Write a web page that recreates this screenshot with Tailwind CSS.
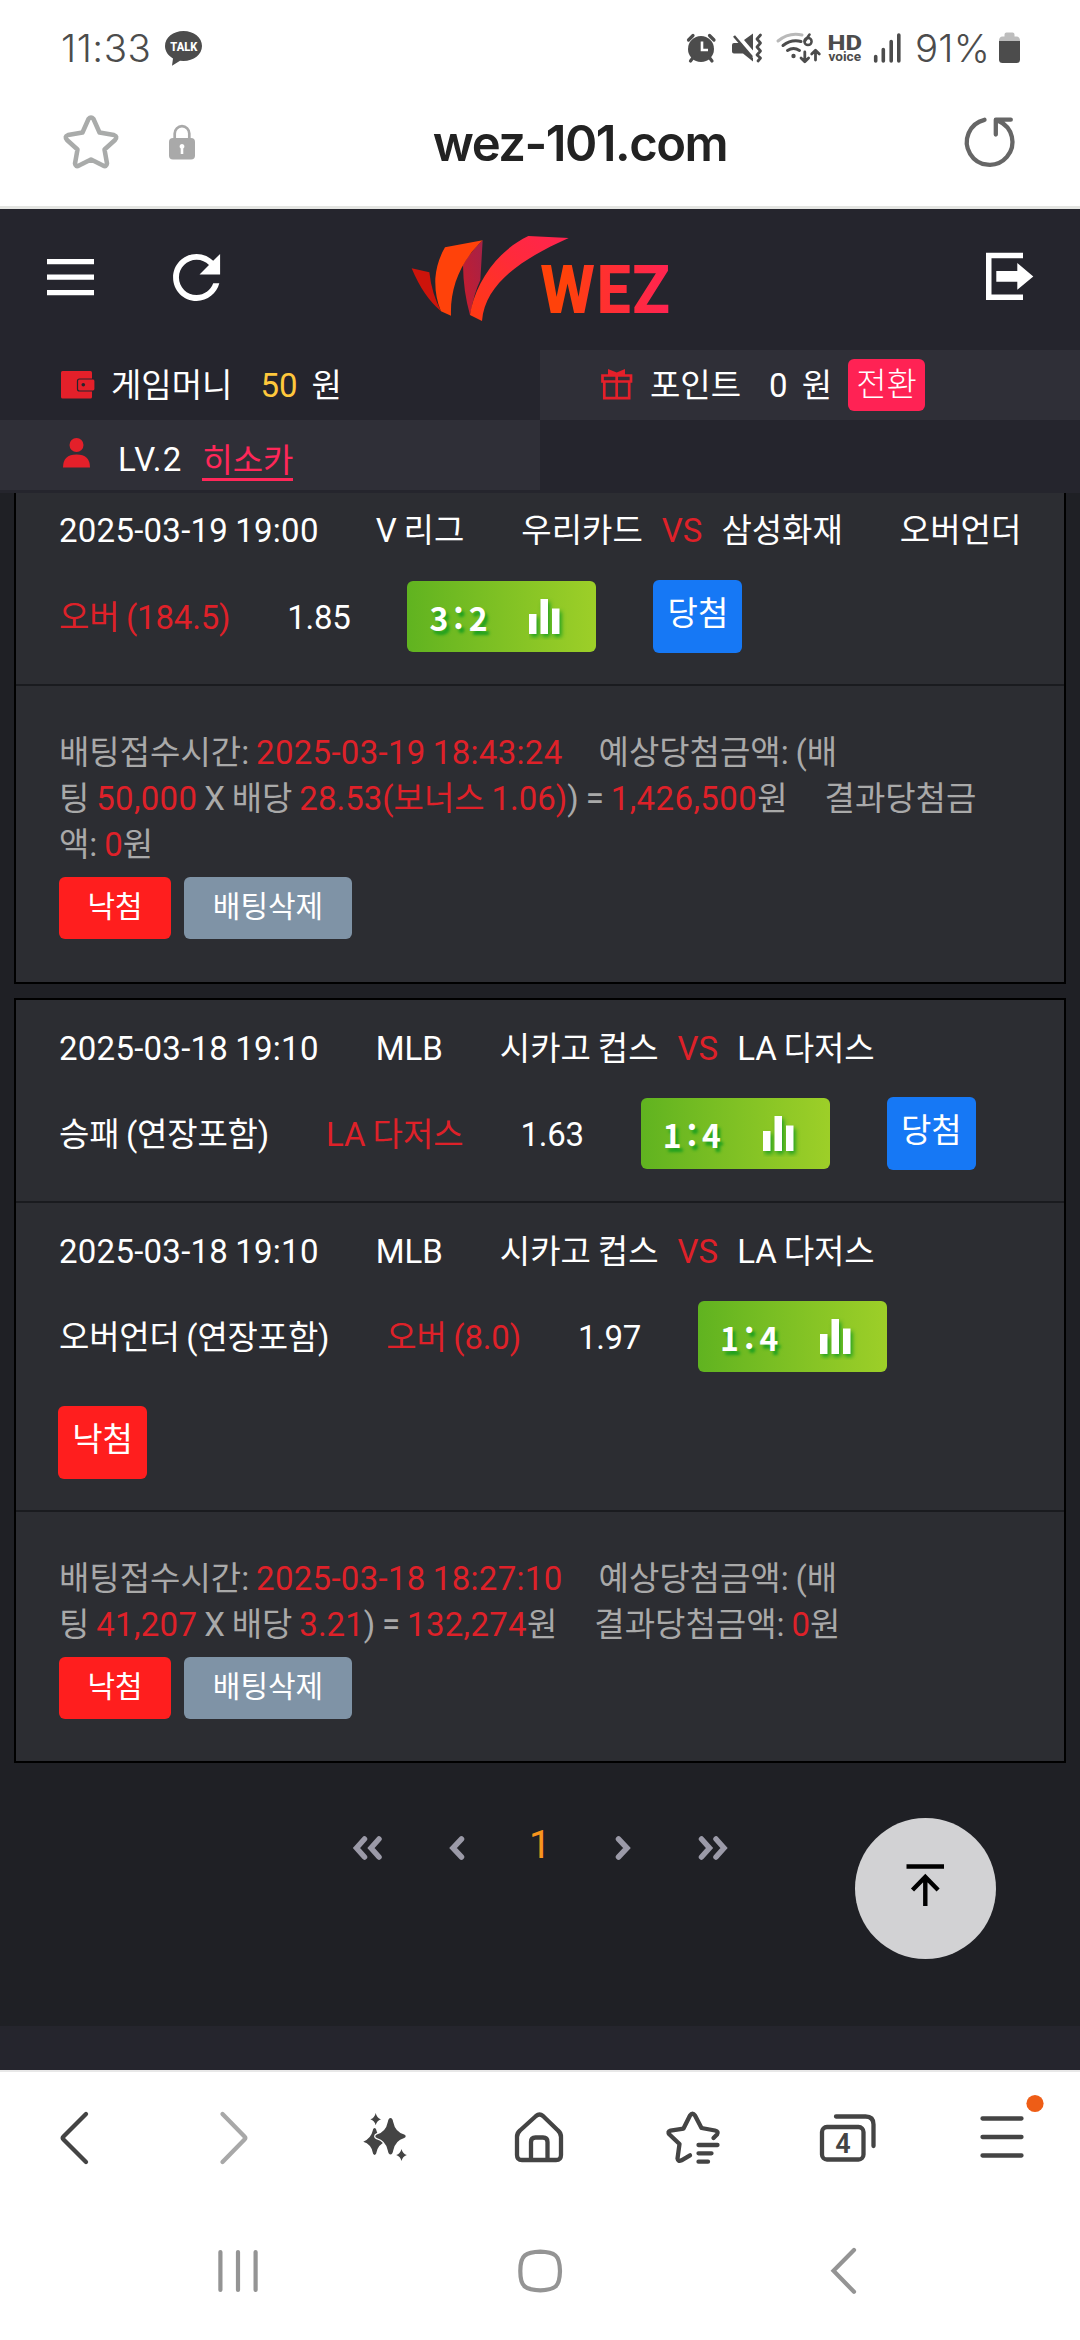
<!DOCTYPE html>
<html lang="ko">
<head>
<meta charset="utf-8">
<title>wez-101.com</title>
<script src="https://cdn.jsdelivr.net/npm/@tailwindcss/browser@4"></script>
</head>
<body class="w-[1080px] h-[2340px] overflow-hidden bg-white font-[Roboto,'Noto_Sans_CJK_KR',sans-serif] text-[33px] leading-[46px] text-white whitespace-nowrap">
<div class="relative flex h-[2340px] w-[1080px] flex-col">

  <!-- status bar -->
  <div class="flex h-[96px] shrink-0 text-[#4c4c4c]">
    <div class="flex w-[160px] items-center pl-[61px] font-[Inter,sans-serif] text-[38.5px] font-light tracking-[0.5px]">11:33</div>
    <svg class="h-[96px] w-[520px]" viewBox="160 0 520 96">
      <path fill="#4c4c4c" d="M183.500 31c10.200 0 18.500 6.600 18.500 15s-8.300 15-18.500 15l-3.500-.3-8 5 1-7.300c-4.800-2.600-8-7.200-8-12.400 0-8.400 8.300-15 18.500-15z"/>
      <text x="170.300" y="51" textLength="27" lengthAdjust="spacingAndGlyphs" font-family="Roboto, sans-serif" font-size="12.800" font-weight="800" fill="#fff">TALK</text>
    </svg>
    <svg class="h-[96px] w-[232px]" viewBox="680 0 232 96" fill="none" stroke="#4c4c4c">
      <!-- alarm -->
      <circle cx="701" cy="49" r="13" fill="#4c4c4c" stroke="none"/>
      <path d="M688.500 40l4.500-4.500M714 40l-4.500-4.500M690.500 61l3-4M712 61l-3-4" stroke-width="3.200" stroke-linecap="round"/>
      <path d="M702 41.500v8.500h6" stroke="#fff" stroke-width="2.600"/>
      <!-- vibrate / mute -->
      <path d="M732 45q0-2 2-2h7l12 15v3.500l-10-8h-9q-2 0-2-2zM753 33.500v17l-9-10.500z" fill="#4c4c4c" stroke="none"/>
      <path d="M734 36l18 21" stroke-width="2.600"/>
      <path d="M760.500 35l-3.500 4 3.500 4-3.500 4 3.500 4-3.500 4 3.500 3-2.500 3" stroke-width="2.800" stroke-linecap="round" stroke-linejoin="round"/>
      <!-- wifi -->
      <path d="M778 41q11-9 24-6" stroke="#b9b9b9" stroke-width="3" stroke-linecap="round"/>
      <path d="M783 45.500q8.500-6.500 18-4M787.500 50.500q6-4 12 0" stroke-width="3" stroke-linecap="round"/>
      <circle cx="793.500" cy="56" r="2.200" fill="#4c4c4c" stroke="none"/>
      <path d="M809.500 34.500l-4.500 6.500" stroke-width="2.600" stroke-linecap="round"/>
      <circle cx="808" cy="41.500" r="3.600" stroke-width="2.500"/>
      <path d="M804.800 52v9M801 58l3.800 3.800 3.800-3.800M815.500 60v-9M811.700 54l3.800-3.800 3.800 3.800" stroke-width="2.800" stroke-linecap="round" stroke-linejoin="round"/>
      <g fill="#4c4c4c" stroke="none" font-family="Roboto, sans-serif">
        <text x="827.500" y="50" textLength="34.500" lengthAdjust="spacingAndGlyphs" font-size="20" font-weight="800">HD</text>
        <text x="828.500" y="61.300" textLength="32.500" lengthAdjust="spacingAndGlyphs" font-size="13" font-weight="700">voice</text>
      </g>
      <path d="M875.700 56.500v4.500M883.300 49.500v11.500M891.200 41.500v19.500M898.800 35v26" stroke-width="3.600" stroke-linecap="round"/>
    </svg>
    <div class="flex w-[80px] items-center pl-[3px] font-[Inter,sans-serif] text-[38.500px] font-light tracking-[0.2px]">91%</div>
    <svg class="h-[96px] w-[88px]" viewBox="992 0 88 96">
      <path fill="#bdbdbd" d="M1004.500 36.500v-2q0-2 2-2h6q2 0 2 2v2h2q3.500 0 3.500 4.500h-21q0-4.500 3.500-4.500z"/>
      <path fill="#4c4c4c" d="M999 41h21v18.500q0 3.500-3.500 3.500h-14q-3.500 0-3.500-3.500z"/>
    </svg>
  </div>

  <!-- address bar -->
  <div class="flex h-[113px] shrink-0 border-b-[3px] border-[#e4e5e2]">
    <svg class="h-[110px] w-[430px]" viewBox="0 96 430 110">
      <path fill="none" stroke="#a9abaa" stroke-width="4.500" stroke-linejoin="round" d="M88.500 119q2.500-3 5 0L99.500 132.500 114 135q4 1.500 1 5L104.500 149.500 107 163.500q-.5 4-4 2L91 159.500 79 165.500q-3.500 2-4-2L77.500 149.500 67 140q-3-3.500 1-5L82.500 132.500z"/>
      <path fill="none" stroke="#a9a9a9" stroke-width="2.700" d="M174.700 140v-6.500a7.300 7.300 0 0 1 14.600 0V140"/>
      <rect x="169" y="138" width="26" height="21.500" rx="4" fill="#a9a9a9"/>
      <path fill="#fff" d="M182 144a2.500 2.500 0 0 1 1.300 4.600v5.400h-2.600v-5.400a2.500 2.500 0 0 1 1.300-4.600z"/>
    </svg>
    <div class="flex w-[300px] items-center justify-center pb-[15px] font-[Inter,sans-serif] text-[49px] font-semibold tracking-[-1.5px] text-[#222]">wez-101.com</div>
    <svg class="h-[110px] w-[350px]" viewBox="730 96 350 110">
      <path fill="none" stroke="#666" stroke-width="4.300" stroke-linecap="round" stroke-linejoin="round" d="M984.500 119.800a22.800 22.800 0 1 0 14 1.200M995.800 134.500v-14.800h15"/>
    </svg>
  </div>

  <!-- site header -->
  <div class="flex h-[141px] shrink-0 bg-[#25252d]">
    <svg class="h-[141px] w-[400px]" viewBox="0 209 400 141" fill="#fff">
      <path d="M47 259h47v5.300H47zM47 274.500h47v5.300H47zM47 290h47v5.300H47z"/>
      <g transform="translate(161.300 242.200) scale(2.940)"><path d="M17.650 6.350C16.200 4.900 14.210 4 12 4c-4.420 0-7.990 3.580-7.990 8s3.570 8 7.990 8c3.730 0 6.840-2.550 7.730-6h-2.080c-.82 2.330-3.040 4-5.650 4-3.310 0-6-2.690-6-6s2.690-6 6-6c1.660 0 3.140.69 4.220 1.780L13 11h7V4l-2.350 2.350z"/></g>
    </svg>
    <svg class="mt-[16px] h-[105px] w-[280px]" viewBox="0 0 840 315">
      <defs>
        <linearGradient id="swoosh" x1="0" y1="1" x2="1" y2="0"><stop offset="0" stop-color="#ff3a10"/><stop offset=".6" stop-color="#ff2a3c"/><stop offset="1" stop-color="#ff2450"/></linearGradient>
        <linearGradient id="word" gradientUnits="userSpaceOnUse" x1="423" y1="0" x2="804" y2="0"><stop offset=".2" stop-color="#ff420a"/><stop offset=".5" stop-color="#ff3030"/><stop offset="1" stop-color="#ff2450"/></linearGradient>
        <linearGradient id="fold" x1="0" y1="1" x2="1" y2="0"><stop offset="0" stop-color="#c81c2c"/><stop offset="1" stop-color="#a52248"/></linearGradient>
      </defs>
      <path fill="#cd140b" d="M35 130L88 142Q95 205 123 259 70 215 35 130z"/>
      <path fill="url(#fold)" d="M248 46L241 165Q222 205 210 270 190 200 189 120 215 75 248 46z"/>
      <path fill="#ff420a" d="M135 67L248 46C180 110 150 190 153 272L123 259Q104 215 106 160 110 110 135 67z"/>
      <path fill="url(#swoosh)" d="M385 33L506 39C380 95 255 170 246 288L210 270C222 185 285 80 385 33z"/>
      <g fill="url(#word)" font-family="Roboto, sans-serif" font-weight="800" font-size="201">
        <text x="421" y="263" textLength="164" lengthAdjust="spacingAndGlyphs">W</text>
        <text x="590" y="263" textLength="102" lengthAdjust="spacingAndGlyphs">E</text>
        <text x="697" y="263" textLength="113" lengthAdjust="spacingAndGlyphs">Z</text>
      </g>
    </svg>
    <svg class="h-[141px] w-[400px]" viewBox="680 209 400 141" fill="#fff">
      <path d="M986 252.700h37v5.500h-31.500v36.300H1023v5.500h-37z"/>
      <path d="M996.300 271h21v-8l16 13.500-16 13.200v-8h-21z"/>
    </svg>
  </div>

  <!-- account strip -->
  <div class="grid h-[143px] shrink-0 grid-cols-2 grid-rows-[70px_70px] bg-[#25252d]">
    <div class="flex items-center">
      <svg class="ml-[60px] h-[34px] w-[36px]" viewBox="60 368 36 34">
        <rect x="61" y="371" width="31" height="27.500" rx="1.500" fill="#e4202a"/>
        <rect x="77.500" y="379" width="17.500" height="12" rx="2" fill="#e4202a" stroke="#25252d" stroke-width="1.200"/>
        <circle cx="83.300" cy="384.800" r="1.800" fill="#25252d"/>
      </svg>
      <span class="ml-[15px] pt-[2px]">게임머니</span><span class="ml-[28px] pt-[2px] text-[#ffc83c]">50</span><span class="ml-[14px] pt-[2px]">원</span>
    </div>
    <div class="flex items-center bg-[#2f2f37]">
      <svg class="ml-[60px] h-[34px] w-[36px]" viewBox="600 368 36 34" fill="none" stroke="#e4202a" stroke-width="2.700">
        <path d="M602.500 375.500h28.500v6H602.500zM604.300 381.500v16.700h24.900v-16.700M616.700 375v23"/>
        <path fill="#e4202a" stroke="none" d="M608 369l8.700 3.500 8.300-3.500v6h-17z"/>
      </svg>
      <span class="ml-[14px] pt-[2px]">포인트</span><span class="ml-[28px] pt-[2px]">0</span><span class="ml-[14px] pt-[2px]">원</span>
      <span class="ml-[16px] flex h-[52px] w-[77px] items-center justify-center rounded-md bg-[#ff2254] font-light">전환</span>
    </div>
    <div class="flex items-center bg-[#2f2f37]">
      <svg class="ml-[60px] h-[34px] w-[36px]" viewBox="60 439 36 34" fill="#e4202a">
        <circle cx="76.500" cy="446" r="7"/><path d="M63 468.500q0-13 13.500-13T90 468.500z"/>
      </svg>
      <span class="ml-[22px] pt-[9px] tracking-[1.2px]">LV.2</span>
      <span class="mt-[9px] ml-[20px] h-[43px] border-b-[3px] border-[#ff2759] leading-[46px] text-[#ff2759]">히소카</span>
    </div>
  </div>

  <!-- bet history -->
  <div class="h-[1533px] shrink-0 bg-[#1f2025] px-[14px] [word-spacing:-1.3px]">
    <section class="h-[491px] border-x-2 border-b-2 border-black bg-[#2c2d32]">
      <div class="flex h-[193px] flex-col gap-[26px] border-b-2 border-[#1a1b1f] pt-[15px] pl-[43px]">
        <div class="flex h-[46px] gap-[57px]">
          <span class="tracking-[0.25px]">2025-03-19 19:00</span><span>V 리그</span>
          <span class="flex gap-[19px]"><span>우리카드</span><span class="text-[#de2129]">VS</span><span>삼성화재</span></span>
          <span>오버언더</span>
        </div>
        <div class="flex h-[73px] items-center gap-[57px]">
          <span class="pt-[2px] tracking-[-0.2px] text-[#de2129]">오버 (184.5)</span><span class="pt-[2px] tracking-[-0.3px]">1.85</span>
          <span class="flex h-[71px] w-[189px] items-center rounded-md bg-linear-to-r from-[#60b320] to-[#9dcf28] pl-[22px]"><span class="w-[100px] font-['Noto_Sans_CJK_KR',sans-serif] text-[32px] font-bold tracking-[5px] text-shadow-[3px_4px_3px_#1fa01f]">3:2</span><svg class="h-[46px] w-[40px]" viewBox="0 0 40 46"><path class="drop-shadow-[2px_3px_2px_#1fa01f]" fill="#fff" d="M0 20h7.500v20H0zM11.500 5H19v35h-7.500zM23 14.500h7.500V40H23z"/></svg></span>
          <span class="h-[73px] w-[89px] rounded-md bg-[#1678f5] pt-[11px] text-center">당첨</span>
        </div>
      </div>
      <div class="pt-[44px] pl-[43px] text-[#a9a9a9]">
        <p>배팅접수시간: <span class="tracking-[0.3px] text-[#de2129]">2025-03-19 18:43:24</span><span class="ml-[36px]">예상당첨금액: (배</span></p>
        <p>팅 <span class="tracking-[0.3px] text-[#de2129]">50,000</span> X 배당 <span class="text-[#de2129]">28.53(보너스 1.06)</span>) = <span class="tracking-[0.4px] text-[#de2129]">1,426,500</span>원<span class="ml-[37px]">결과당첨금</span></p>
        <p>액: <span class="text-[#de2129]">0</span>원</p>
        <div class="mt-[9px] flex gap-[13px] text-[30px] text-white">
          <span class="h-[62px] w-[112px] rounded-md bg-[#ff1e1e] pt-[7px] text-center">낙첨</span>
          <span class="h-[62px] w-[168px] rounded-md bg-[#7f93a6] pt-[7px] text-center">배팅삭제</span>
        </div>
      </div>
    </section>

    <section class="mt-[14px] h-[765px] border-2 border-black bg-[#2c2d32]">
      <div class="flex h-[203px] flex-col gap-[25px] border-b-2 border-[#1a1b1f] pt-[26px] pl-[43px]">
        <div class="flex h-[46px] gap-[57px]">
          <span class="tracking-[0.25px]">2025-03-18 19:10</span><span>MLB</span>
          <span class="flex gap-[19px]"><span>시카고 컵스</span><span class="text-[#de2129]">VS</span><span>LA 다저스</span></span>
        </div>
        <div class="flex h-[73px] items-center gap-[57px]">
          <span class="pt-[2px] tracking-[-0.2px]">승패 (연장포함)</span><span class="pt-[2px] text-[#de2129]">LA 다저스</span><span class="pt-[2px] tracking-[-0.3px]">1.63</span>
          <span class="flex h-[71px] w-[189px] items-center rounded-md bg-linear-to-r from-[#60b320] to-[#9dcf28] pl-[22px]"><span class="w-[100px] font-['Noto_Sans_CJK_KR',sans-serif] text-[32px] font-bold tracking-[5px] text-shadow-[3px_4px_3px_#1fa01f]">1:4</span><svg class="h-[46px] w-[40px]" viewBox="0 0 40 46"><path class="drop-shadow-[2px_3px_2px_#1fa01f]" fill="#fff" d="M0 20h7.500v20H0zM11.500 5H19v35h-7.500zM23 14.500h7.500V40H23z"/></svg></span>
          <span class="h-[73px] w-[89px] rounded-md bg-[#1678f5] pt-[11px] text-center">당첨</span>
        </div>
      </div>
      <div class="h-[309px] border-b-2 border-[#1a1b1f] pt-[26px] pl-[43px]">
        <div class="flex h-[46px] gap-[57px]">
          <span class="tracking-[0.25px]">2025-03-18 19:10</span><span>MLB</span>
          <span class="flex gap-[19px]"><span>시카고 컵스</span><span class="text-[#de2129]">VS</span><span>LA 다저스</span></span>
        </div>
        <div class="mt-[25px] flex h-[73px] items-center gap-[57px]">
          <span class="pt-[2px] tracking-[-0.2px]">오버언더 (연장포함)</span><span class="pt-[2px] tracking-[-0.2px] text-[#de2129]">오버 (8.0)</span><span class="pt-[2px] tracking-[-0.3px]">1.97</span>
          <span class="flex h-[71px] w-[189px] items-center rounded-md bg-linear-to-r from-[#60b320] to-[#9dcf28] pl-[22px]"><span class="w-[100px] font-['Noto_Sans_CJK_KR',sans-serif] text-[32px] font-bold tracking-[5px] text-shadow-[3px_4px_3px_#1fa01f]">1:4</span><svg class="h-[46px] w-[40px]" viewBox="0 0 40 46"><path class="drop-shadow-[2px_3px_2px_#1fa01f]" fill="#fff" d="M0 20h7.500v20H0zM11.500 5H19v35h-7.500zM23 14.500h7.500V40H23z"/></svg></span>
        </div>
        <div class="mt-[33px] -ml-px h-[73px] w-[89px] rounded-md bg-[#ff1e1e] pt-[11px] text-center">낙첨</div>
      </div>
      <div class="pt-[44px] pl-[43px] text-[#a9a9a9]">
        <p>배팅접수시간: <span class="tracking-[0.3px] text-[#de2129]">2025-03-18 18:27:10</span><span class="ml-[36px]">예상당첨금액: (배</span></p>
        <p>팅 <span class="tracking-[0.3px] text-[#de2129]">41,207</span> X 배당 <span class="text-[#de2129]">3.21</span>) = <span class="tracking-[0.3px] text-[#de2129]">132,274</span>원<span class="ml-[37px]">결과당첨금액: <span class="text-[#de2129]">0</span>원</span></p>
        <div class="mt-[9px] flex gap-[13px] text-[30px] text-white">
          <span class="h-[62px] w-[112px] rounded-md bg-[#ff1e1e] pt-[7px] text-center">낙첨</span>
          <span class="h-[62px] w-[168px] rounded-md bg-[#7f93a6] pt-[7px] text-center">배팅삭제</span>
        </div>
      </div>
    </section>

    <div class="mt-[59px] flex h-[46px] justify-center">
      <svg class="h-[46px] w-[180px]" viewBox="346 1822 180 46" fill="none" stroke="#9b9aa8" stroke-width="5.500" stroke-linecap="round" stroke-linejoin="miter"><path d="M364.500 1839l-8 9 8 9M379 1839l-8 9 8 9M461.500 1839l-8.500 9 8.500 9"/></svg>
      <span class="w-[28px] text-center text-[39px] text-[#f7951d]">1</span>
      <svg class="h-[46px] w-[180px]" viewBox="554 1822 180 46" fill="none" stroke="#9b9aa8" stroke-width="5.500" stroke-linecap="round" stroke-linejoin="miter"><path d="M618.500 1839l8.500 9-8.500 9M701.500 1839l8 9-8 9M716 1839l8 9-8 9"/></svg>
    </div>
  </div>
  <div class="h-[46px] shrink-0 border-b-2 border-[#e8e8e8] bg-[#25252d]"></div>

  <!-- browser toolbar -->
  <div class="flex h-[130px] shrink-0">
    <svg class="h-[130px] w-[308px]" viewBox="0 2072 308 130" fill="none" stroke-width="4.300" stroke-linecap="round" stroke-linejoin="round">
      <path stroke="#444" d="M86 2114l-22.500 22.500q-1.500 1.500 0 3L86 2162"/>
      <path stroke="#a8a8a8" d="M222.500 2114l22 22.500q1.500 1.500 0 3l-22 22.500"/>
    </svg>
    <svg class="h-[130px] w-[155px]" viewBox="308 2072 155 130" fill="#444">
      <path d="M374.600 2128q1.600 0 2 3 1.500 7 9.400 10.700-7.800 2.600-9.400 10.300-.4 3-2 3t-2-3q-1.500-7.700-9.300-10.300 7.800-3.500 9.300-10.700.4-3 2-3z"/>
      <path stroke="#fff" stroke-width="2.500" paint-order="stroke" d="M390.500 2118q2 0 2.700 4 2 10 11 12.500 1.500.6 1.500 1.700t-1.500 1.800q-9 2.500-11 12.500-.7 4-2.700 4t-2.700-4q-2-10-11-12.500-1.500-.7-1.500-1.800t1.500-1.700q9-2.500 11-12.500.7-4 2.700-4z"/>
      <path d="M375.700 2113q1 5 5.300 6.300-4.300 1.500-5.300 6-1-4.500-5.300-6 4.300-1.300 5.300-6.300zM401.500 2149q1 4.700 5.300 6-4.300 1.500-5.300 6-1-4.500-5.300-6 4.300-1.300 5.300-6z"/>
    </svg>
    <svg class="h-[130px] w-[617px]" viewBox="463 2072 617 130" fill="none" stroke="#444" stroke-width="4.300" stroke-linecap="round" stroke-linejoin="round">
      <path d="M517 2137q0-4 3-6.500l16-14.500q3.500-3 7 0l15 14.500q3 2.500 3 6.500v18q0 5-5 5h-34q-5 0-5-5zM531 2159v-17q0-4.500 4.500-4.500h7.500q4.500 0 4.500 4.500v17"/>
      <path d="M713.500 2138l3.500-3.500q2-3-2-4l-13.500-2.500-6.500-12.500q-2.500-3.500-5 0l-6.500 13-13 2q-3.500 1-1 4l10 9.500-2 14.500q.5 3.500 4 1.800l8.500-5M698.500 2145h19M698.500 2153.300h13M698.500 2161.700h9.500"/>
      <rect x="822" y="2127" width="41.500" height="32.500" rx="5"/>
      <path d="M836 2116.500h29.500q8 0 8 8V2146"/>
      <path d="M982.500 2118.500h39M982.500 2137h39M982.500 2155.500h39"/>
      <circle cx="1035" cy="2103.500" r="8.600" fill="#ee5d16" stroke="none"/>
      <text x="843" y="2152.800" text-anchor="middle" font-family="Roboto, sans-serif" font-size="27" font-weight="600" fill="#444" stroke="none">4</text>
    </svg>
  </div>

  <!-- system navigation -->
  <svg class="h-[138px] w-[1080px] shrink-0" viewBox="0 2202 1080 138" fill="none" stroke="#949494" stroke-width="4.200" stroke-linecap="round">
    <path d="M220.400 2252v38M238 2252v38M255.600 2252v38"/>
    <path d="M520.300 2271q0-12 4.500-15.500t15.500-3.800q11 .3 15.200 3.800t4.500 15.500q-.3 12-4.500 15.500t-15.200 3.800q-11-.3-15.500-3.800t-4.500-15.500z"/>
    <path d="M854 2250l-20.500 20.800 20.500 21"/>
  </svg>

  <button class="absolute top-[1818px] left-[855px] size-[141px] rounded-full bg-[#d2d2d4]">
    <svg class="size-[141px]" viewBox="855 1818 141 141" fill="none" stroke="#000" stroke-width="4.400"><path d="M906.500 1866.500h37.500M925.300 1906v-28M912.500 1890l12.800-13 12.800 13"/></svg>
  </button>
</div>
</body>
</html>
